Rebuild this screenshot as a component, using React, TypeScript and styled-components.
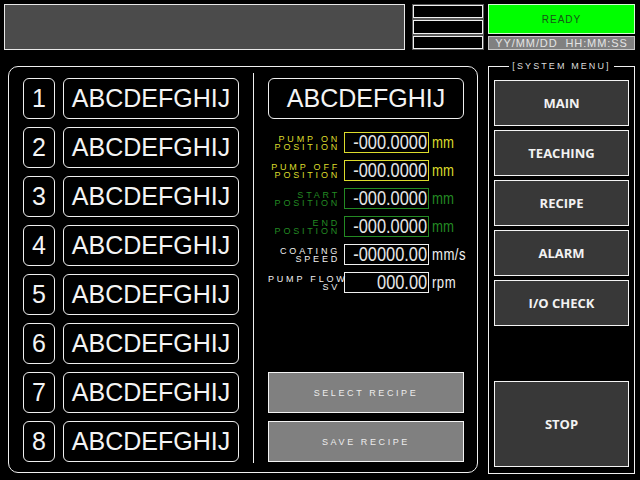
import * as React from 'react';
import styled, { createGlobalStyle } from 'styled-components';

const GlobalStyle = createGlobalStyle`
	html, body {
		margin: 0;
		padding: 0;
		background: #000;
	}
	* {
		box-sizing: border-box;
	}
`;

const Screen = styled.div`
	width: 640px;
	height: 480px;
	overflow: hidden;
	background: #000;
	display: flex;
	flex-direction: column;
	font-family: 'Liberation Sans', Arial, sans-serif;
`;

const TopBar = styled.header`
	display: flex;
	height: 46px;
	margin: 4px 0 0 4px;
`;

const MessageBox = styled.div`
	width: 401px;
	background: #4b4b4b;
	border: 1px solid #e8e8e8;
`;

const LampStack = styled.div`
	width: 70px;
	margin-left: 8px;
	display: flex;
	flex-direction: column;
	gap: 2px;
	padding: 1px 0;
`;

const Lamp = styled.div`
	flex: 1;
	background: #000;
	border: 1px solid #f0f0f0;
	outline: 1px solid #5a5a5a;
`;

const StatusCol = styled.div`
	width: 147px;
	margin-left: 5px;
	display: flex;
	flex-direction: column;
	gap: 2px;
`;

const ReadyLamp = styled.div`
	height: 30px;
	background: #00ff00;
	border: 1px solid #d0ffd0;
	display: flex;
	align-items: center;
	justify-content: center;
	font-size: 10px;
	letter-spacing: 1px;
	color: #175417;
`;

const Clock = styled.div`
	flex: 1;
	background: #808080;
	border: 1px solid #c8c8c8;
	display: flex;
	align-items: center;
	justify-content: center;
	font-size: 11px;
	letter-spacing: 0.9px;
	color: #e4e4e4;
	white-space: pre;
`;

const Main = styled.main`
	display: flex;
	margin: 16px 0 0 8px;
	align-items: flex-start;
`;

const Panel = styled.section`
	width: 470px;
	height: 407px;
	border: 1px solid #f0f0f0;
	border-radius: 10px;
	padding: 11px 13px 10px 14px;
	display: flex;
`;

const RecipeList = styled.div`
	width: 216px;
	display: flex;
	flex-direction: column;
	gap: 8px;
`;

const RecipeRow = styled.div`
	display: flex;
	gap: 8px;
	height: 41px;
`;

const OutlineBox = styled.div<{ $wide?: boolean }>`
	border: 1px solid #f0f0f0;
	border-radius: 6px;
	display: flex;
	align-items: center;
	justify-content: center;
	color: #f4f4f4;
	font-size: 25px;
	line-height: 1;
	height: 41px;
	${(p) => (p.$wide ? 'flex: 1;' : 'width: 32px;')}
`;

const TitleBox = styled(OutlineBox)`
	width: 100%;
	flex: none;
`;

const Divider = styled.div`
	width: 1px;
	background: #f0f0f0;
	margin: -5px 14px -1px 14px;
`;

const DetailCol = styled.div`
	width: 196px;
	display: flex;
	flex-direction: column;
`;

const ParamList = styled.div`
	margin-top: 13px;
	display: flex;
	flex-direction: column;
	gap: 7px;
`;

const ParamRow = styled.div`
	display: flex;
	align-items: center;
	height: 21px;
`;

const tones = {
	yellow: '#dcdc2c',
	green: '#238a23',
	white: '#f0f0f0',
};

type Tone = keyof typeof tones;

const ParamLabel = styled.div<{ $tone: Tone }>`
	flex: none;
	width: 72px;
	text-align: right;
	font-size: 9px;
	line-height: 8px;
	letter-spacing: 2.8px;
	margin-right: -2px;
	color: ${(p) => tones[p.$tone]};
	white-space: pre;
`;

const ValueBox = styled.div<{ $tone: Tone }>`
	flex: none;
	width: 85px;
	height: 21px;
	margin-left: 6px;
	border: 1px solid ${(p) => tones[p.$tone]};
	color: #e6e6e6;
	font-size: 20px;
	line-height: 19px;
	display: flex;
	justify-content: flex-end;
	padding-right: 1px;
	white-space: nowrap;
`;

// the panel font is a condensed one, squeeze the glyphs to fit
const Narrow = styled.span<{ $origin: 'left' | 'right' }>`
	flex: none;
	display: inline-block;
	transform: scaleX(0.82);
	transform-origin: ${(p) => p.$origin} center;
`;

const Unit = styled.span<{ $tone: Tone }>`
	margin-left: 3px;
	font-size: 16px;
	color: ${(p) => tones[p.$tone]};
	letter-spacing: ${(p) => (p.$tone === 'white' ? '0.6px' : '0')};
	white-space: nowrap;
`;

const ActionStack = styled.div`
	margin-top: auto;
	display: flex;
	flex-direction: column;
	gap: 8px;
`;

const ActionButton = styled.button`
	height: 41px;
	background: #808080;
	border: 1px solid #f4f4f4;
	color: #ededed;
	font-family: 'Liberation Sans', Arial, sans-serif;
	font-size: 9px;
	letter-spacing: 2.6px;
	padding: 0;
`;

const MenuFrame = styled.fieldset`
	width: 147px;
	height: 413px;
	margin: -5px 0 0 10px;
	padding: 0 5px 5px 5px;
	border: 1px solid #f0f0f0;
	min-width: 0;
`;

const MenuTitle = styled.legend`
	margin: 0 auto;
	padding: 0 3px;
	font-size: 9px;
	line-height: 10px;
	letter-spacing: 2.1px;
	color: #dcdcdc;
`;

const MenuList = styled.nav`
	margin-top: 9px;
	height: 387px;
	display: flex;
	flex-direction: column;
	gap: 4px;
`;

const MenuButton = styled.button<{ $tall?: boolean }>`
	height: ${(p) => (p.$tall ? '86px' : '46px')};
	margin-top: ${(p) => (p.$tall ? 'auto' : '0')};
	background: #383838;
	border: 1px solid #f4f4f4;
	color: #f2f2f2;
	font-family: 'Open Sans', 'Noto Sans', sans-serif;
	font-weight: 700;
	font-size: 13px;
	padding: 0;
`;

const recipes = [1, 2, 3, 4, 5, 6, 7, 8];

const params: { label: string; value: string; unit: string; tone: Tone }[] = [
	{ label: 'PUMP ON\nPOSITION', value: '-000.0000', unit: 'mm', tone: 'yellow' },
	{ label: 'PUMP OFF\nPOSITION', value: '-000.0000', unit: 'mm', tone: 'yellow' },
	{ label: 'START\nPOSITION', value: '-000.0000', unit: 'mm', tone: 'green' },
	{ label: 'END\nPOSITION', value: '-000.0000', unit: 'mm', tone: 'green' },
	{ label: 'COATING\nSPEED', value: '-00000.00', unit: 'mm/s', tone: 'white' },
	{ label: 'PUMP FLOW\nSV', value: '000.00', unit: 'rpm', tone: 'white' },
];

const menu = ['MAIN', 'TEACHING', 'RECIPE', 'ALARM', 'I/O CHECK'];

export default function App(): JSX.Element {
	return (
		<Screen>
			<GlobalStyle />
			<TopBar>
				<MessageBox />
				<LampStack>
					<Lamp />
					<Lamp />
					<Lamp />
				</LampStack>
				<StatusCol>
					<ReadyLamp>READY</ReadyLamp>
					<Clock>{'YY/MM/DD  HH:MM:SS'}</Clock>
				</StatusCol>
			</TopBar>
			<Main>
				<Panel>
					<RecipeList>
						{recipes.map((n) => (
							<RecipeRow key={n}>
								<OutlineBox>{n}</OutlineBox>
								<OutlineBox $wide>ABCDEFGHIJ</OutlineBox>
							</RecipeRow>
						))}
					</RecipeList>
					<Divider />
					<DetailCol>
						<TitleBox>ABCDEFGHIJ</TitleBox>
						<ParamList>
							{params.map((p) => (
								<ParamRow key={p.label}>
									<ParamLabel $tone={p.tone}>{p.label}</ParamLabel>
									<ValueBox $tone={p.tone}>
										<Narrow $origin="right">{p.value}</Narrow>
									</ValueBox>
									<Unit $tone={p.tone}>
										<Narrow $origin="left">{p.unit}</Narrow>
									</Unit>
								</ParamRow>
							))}
						</ParamList>
						<ActionStack>
							<ActionButton>SELECT RECIPE</ActionButton>
							<ActionButton>SAVE RECIPE</ActionButton>
						</ActionStack>
					</DetailCol>
				</Panel>
				<MenuFrame>
					<MenuTitle>[SYSTEM MENU]</MenuTitle>
					<MenuList>
						{menu.map((m) => (
							<MenuButton key={m}>{m}</MenuButton>
						))}
						<MenuButton $tall>STOP</MenuButton>
					</MenuList>
				</MenuFrame>
			</Main>
		</Screen>
	);
}
